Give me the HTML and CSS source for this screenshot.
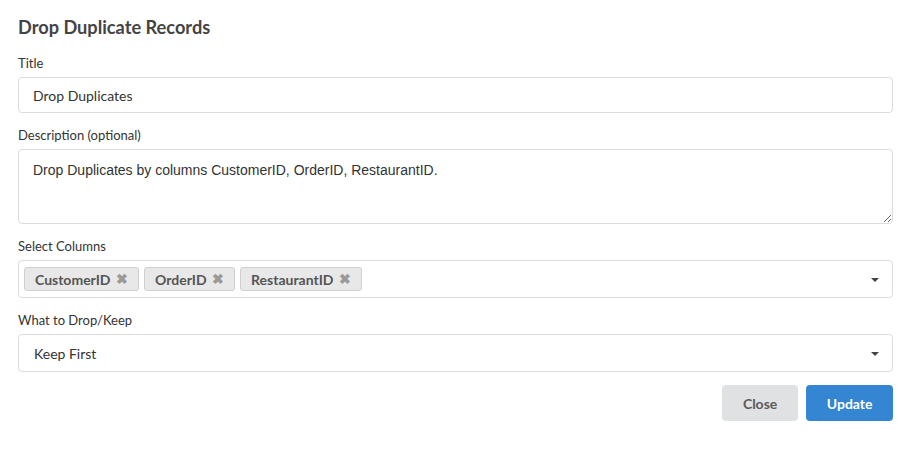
FILE: index.html
```html
<!DOCTYPE html>
<html lang="en">
<head>
    <meta charset="UTF-8">
    <meta name="viewport" content="width=device-width, initial-scale=1.0">
    <title>Drop Duplicate Records</title>
    <link rel="stylesheet" href="styles.css">
</head>

<body>
    <h2 class="header">Drop Duplicate Records</h2>
    <form class="form">
        <!-- Title -->
        <div class="field">
            <label for="title">Title</label>
            <input type="text" id="title" class="text-input" value="Drop Duplicates" />
        </div>

        <!-- Description -->
        <div class="field">
            <label for="desc">Description (optional)</label>
            <textarea id="desc" class="text-area">Drop Duplicates by columns CustomerID, OrderID, RestaurantID.</textarea>
        </div>

        <!-- Columns -->
        <div class="field">
            <label>Select Columns</label>
            <div class="dropdown multi">
                <a class="tag">CustomerID <span class="tag-x">&#10006;</span></a>
                <a class="tag">OrderID <span class="tag-x">&#10006;</span></a>
                <a class="tag">RestaurantID <span class="tag-x">&#10006;</span></a>
                <span class="caret"></span>
            </div>
        </div>

        <!-- Drop / Keep -->
        <div class="field">
            <label>What to Drop/Keep</label>
            <div class="dropdown">
                <span class="dropdown-text">Keep First</span>
                <span class="caret"></span>
            </div>
        </div>

        <div class="actions">
            <button type="button" class="btn">Close</button>
            <button type="button" class="btn primary">Update</button>
        </div>
    </form>
</body>
</html>
```

FILE: styles.css
```css
* {
    margin: 0;
    padding: 0;
    box-sizing: border-box;
}
body {
    background: #fff;
    font-family: Lato, "Open Sans", sans-serif;
    color: #333;
    padding: 15px 18px;
    font-size: 14px;
}
.header {
    font-size: 18.2px;
    line-height: 24px;
    font-weight: bold;
    color: #444;
    margin-bottom: 15px;
}
.field {
    margin-bottom: 13px;
}
.field label {
    display: block;
    font-size: 13px;
    line-height: 16px;
    padding-top: 1px;
    margin-bottom: 6px;
    color: #333;
}
.text-input,
.text-area,
.dropdown {
    display: block;
    width: 100%;
    border: 1px solid #dcdcdc;
    border-radius: 4px;
    background: #fff;
    color: #333;
    font-size: 14px;
}
.text-input {
    height: 36px;
    padding: 0 14px;
    font-family: Lato, sans-serif;
    outline: none;
}
.text-area {
    height: 75px;
    padding: 11px 14px;
    font-family: "Liberation Sans", Arial, sans-serif;
    line-height: 18px;
    resize: vertical;
    outline: none;
}
.dropdown {
    position: relative;
    display: flex;
    align-items: center;
    height: 38px;
    padding: 0 15px;
}
.dropdown.multi {
    padding: 0 5px;
    gap: 5px;
}
.dropdown-text {
    color: #333;
}
.caret {
    position: absolute;
    right: 13px;
    top: 17px;
    width: 0;
    height: 0;
    border-left: 4px solid transparent;
    border-right: 4px solid transparent;
    border-top: 4px solid #444;
}
.tag {
    display: inline-flex;
    align-items: center;
    height: 24px;
    padding: 0 10px;
    background: #e8e8e8;
    border: 1px solid #d0d0d0;
    border-radius: 3px;
    font-size: 14px;
    font-weight: bold;
    color: #555;
}
.tag-x {
    font-size: 13.5px;
    color: #9a9a9a;
    margin-left: 5.5px;
}
.actions {
    display: flex;
    justify-content: flex-end;
    gap: 8px;
    margin-top: 1px;
}
.btn {
    height: 36px;
    padding: 0 21px;
    border: none;
    border-radius: 4px;
    background: #e0e1e2;
    color: #5a5a5a;
    font-family: Lato, sans-serif;
    font-size: 14px;
    font-weight: bold;
    cursor: pointer;
}
.btn.primary {
    padding: 0 20.5px;
    background: #3485d2;
    color: #fff;
}
```
